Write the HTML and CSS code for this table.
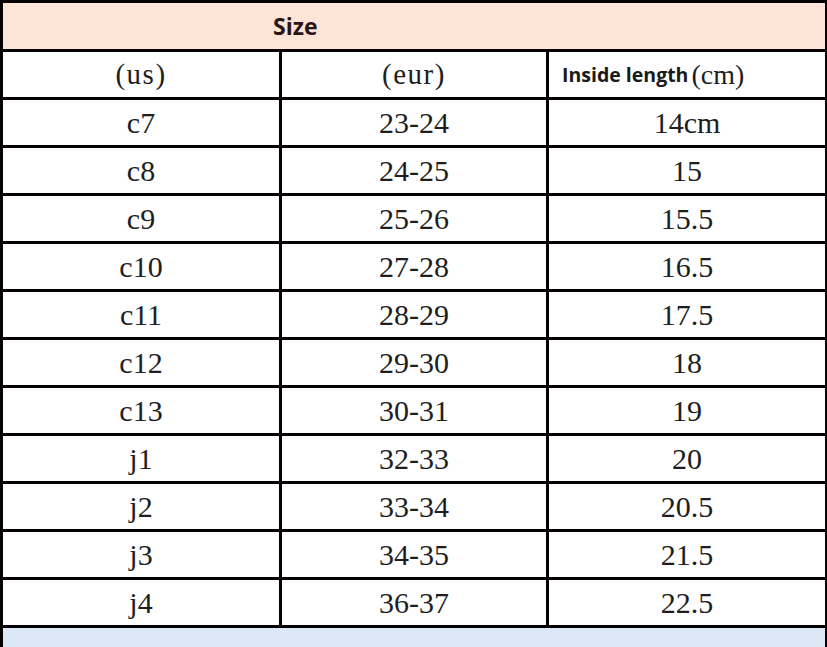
FILE: index.html
```html
<!DOCTYPE html>
<html lang="en">
<head>
<meta charset="utf-8">
<title>Size chart</title>
<link rel="stylesheet" href="styles.css">
</head>
<body>
<div class="chart">
  <div class="cell title">Size</div>
  <div class="cell head">(us)</div>
  <div class="cell head">(eur)</div>
  <div class="cell head inside"><span class="lbl">Inside length</span>(cm)</div>

  <div class="cell">c7</div><div class="cell">23-24</div><div class="cell">14cm</div>
  <div class="cell">c8</div><div class="cell">24-25</div><div class="cell">15</div>
  <div class="cell">c9</div><div class="cell">25-26</div><div class="cell">15.5</div>
  <div class="cell">c10</div><div class="cell">27-28</div><div class="cell">16.5</div>
  <div class="cell">c11</div><div class="cell">28-29</div><div class="cell">17.5</div>
  <div class="cell">c12</div><div class="cell">29-30</div><div class="cell">18</div>
  <div class="cell">c13</div><div class="cell">30-31</div><div class="cell">19</div>
  <div class="cell">j1</div><div class="cell">32-33</div><div class="cell">20</div>
  <div class="cell">j2</div><div class="cell">33-34</div><div class="cell">20.5</div>
  <div class="cell">j3</div><div class="cell">34-35</div><div class="cell">21.5</div>
  <div class="cell">j4</div><div class="cell">36-37</div><div class="cell">22.5</div>

  <div class="cell foot"></div>
</div>
</body>
</html>
```

FILE: styles.css
```css
html, body {
  margin: 0;
  padding: 0;
  background: #0d0303;
}

.chart {
  width: 827px;
  height: 647px;
  overflow: hidden;
  box-sizing: border-box;
  padding: 3px 2px 0 3px;
  background: #050101;
  display: grid;
  grid-template-columns: 276px 264px 276px;
  grid-template-rows: 46px repeat(12, 45px) 1fr;
  gap: 3px;
}

.cell {
  background: #ffffff;
  display: flex;
  align-items: center;
  justify-content: center;
  font-family: "Liberation Serif", "Times New Roman", serif;
  font-size: 30px;
  color: #1e1e1e;
  white-space: nowrap;
}

.title {
  grid-column: 1 / -1;
  background: #fce4d6;
  justify-content: flex-start;
  padding-left: 270px;
  font-family: "Open Sans", Lato, sans-serif;
  font-weight: 700;
  font-size: 23px;
  color: #2a1414;
}

.head {
  letter-spacing: 1.5px;
  font-size: 29px;
}

.inside {
  justify-content: flex-start;
  padding-left: 13px;
  letter-spacing: 0;
  font-size: 28px;
}

.lbl {
  font-family: "Open Sans", Lato, sans-serif;
  font-weight: 700;
  font-size: 19.5px;
  color: #1a1a1a;
  margin-right: 3px;
}

.foot {
  grid-column: 1 / -1;
  background: #dce8f5;
}
```
